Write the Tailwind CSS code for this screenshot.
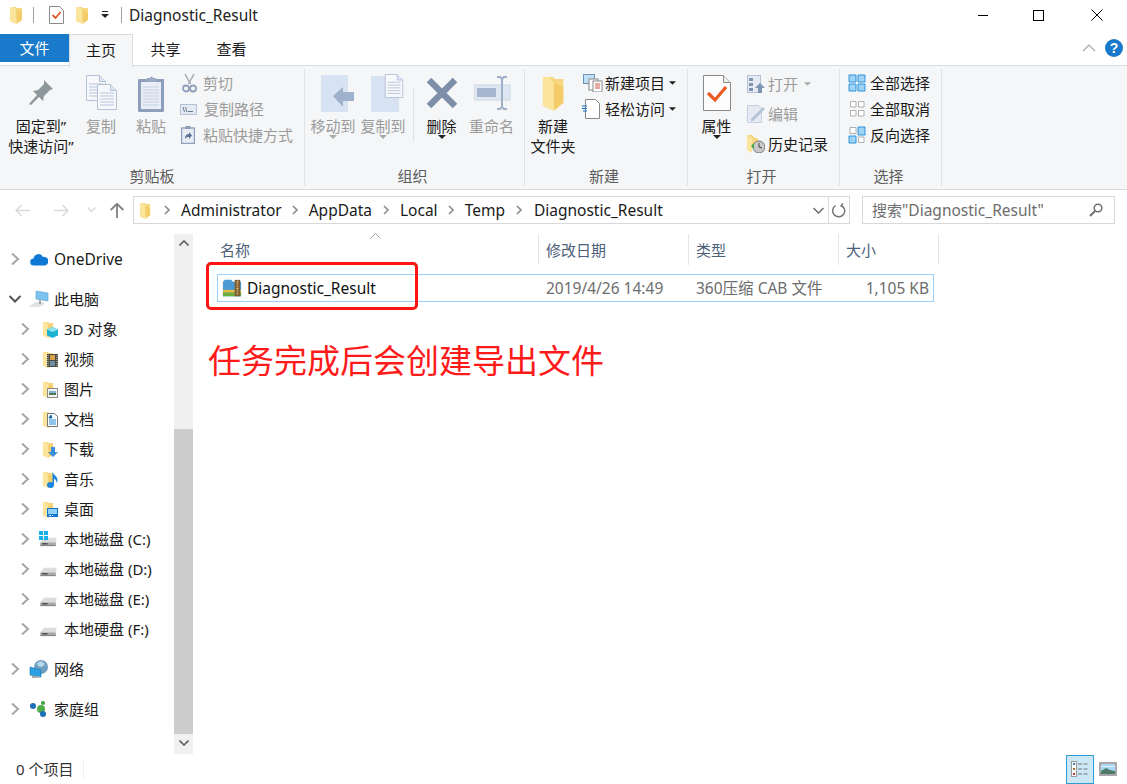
<!DOCTYPE html>
<html><head><meta charset="utf-8"><script src="https://cdn.jsdelivr.net/npm/@tailwindcss/browser@4"></script></head>
<body class="m-0 bg-white">
<svg width="0" height="0" class="absolute">
<defs>
<symbol id="folder" viewBox="0 0 14 18"><path d="M1 1h6l1 1h5v12H5z" fill="#f6d77f"/><path d="M1 1h3.500l3 3v14l-6.500-2.500z" fill="#fbe49c"/><path d="M7.500 4v14l5.500-4V6z" fill="#f4cd68"/></symbol>
<symbol id="chev" viewBox="0 0 10 14"><path d="M2 1.500l6 5.500-6 5.500" fill="none" stroke="#a6a6a6" stroke-width="2"/></symbol>
<symbol id="chevS" viewBox="0 0 8 10"><path d="M2 1l4 4-4 4" fill="none" stroke="#8a8a8a" stroke-width="1.600"/></symbol>
<symbol id="drive" viewBox="0 0 20 12"><path d="M1 7l4-5h14l-1 5z" fill="#dcdcdc"/><path d="M1 7h17v3.500H1z" fill="#a8a8a8"/><path d="M3 8.500h6" stroke="#333" stroke-width="1.200"/><path d="M1 10.500h17" stroke="#777"/></symbol>
<symbol id="doc" viewBox="0 0 20 26"><path d="M.5.500h13l6 6v19H.5z" fill="#f6f8fc" stroke="#b4c0d6"/><path d="M13.500.500v6h6" fill="#dfe6f2" stroke="#b4c0d6"/><path d="M3 9h14M3 12h14M3 15h14M3 18h14M3 21h14" stroke="#b9c5da"/></symbol>
</defs>
</svg>

<div class="w-[1127px] h-[784px] overflow-hidden flex flex-col text-[15px] leading-5 text-[#1a1a1a] bg-white" style="font-family:'Noto Sans','Noto Sans CJK SC',sans-serif">

<!-- title bar -->
<div class="h-[33px] flex items-center pb-[3px]">
 <svg class="ml-[9px] w-[14px] h-[18px]"><use href="#folder"/></svg>
 <div class="ml-[10px] w-px h-4 bg-[#a0a0a0]"></div>
 <svg class="ml-[15px] w-[15px] h-[18px]" viewBox="0 0 15 18"><path d="M.5.500h10l4 4v13H.5z" fill="#fff" stroke="#8a8a8a"/><path d="M3.500 9l3 3 5-6" fill="none" stroke="#e2572a" stroke-width="1.800"/></svg>
 <svg class="ml-[11px] w-[14px] h-[18px]"><use href="#folder"/></svg>
 <svg class="ml-[12px] w-2 h-2" viewBox="0 0 8 8"><path d="M1 0h6v1H1zM0 3h8L4 7z" fill="#222"/></svg>
 <div class="ml-[12px] w-px h-4 bg-[#a0a0a0]"></div>
 <span class="ml-[7px] text-[15.5px] text-[#222]">Diagnostic_Result</span>
 <div class="ml-auto mr-[7px] flex items-center">
  <div class="w-[46px] mr-[9px] flex justify-center"><div class="w-[10px] h-px bg-black"></div></div>
  <div class="w-[46px] mr-[13px] flex justify-center"><div class="w-[11px] h-[11px] border border-black"></div></div>
  <div class="w-[46px] flex justify-center"><svg class="w-[12px] h-[12px]" viewBox="0 0 12 12"><path d="M.5.500l11 11M11.500.500l-11 11" stroke="#000"/></svg></div>
 </div>
</div>

<!-- tabs -->
<div class="h-[33px] flex relative z-10">
 <div class="w-[69px] h-[28px] mt-px bg-[#1979ca] text-white flex items-center justify-center">文件</div>
 <div class="w-[64px] h-[33px] mt-px pb-[3px] bg-[#f5f6f7] border border-b-0 border-[#dadbdc] flex items-center justify-center">主页</div>
 <div class="w-[65px] pb-[2px] flex items-center justify-center">共享</div>
 <div class="w-[67px] pb-[2px] flex items-center justify-center">查看</div>
 <div class="ml-auto flex items-center mr-[4px] mb-[3px]">
  <svg class="w-[14px] h-2 mr-[9px]" viewBox="0 0 14 8"><path d="M1 7l6-6 6 6" fill="none" stroke="#a8a8a8" stroke-width="1.200"/></svg>
  <div class="w-[18px] h-[18px] rounded-full bg-[#1979ca] text-white text-[14px] font-bold flex items-center justify-center" style="font-family:'Liberation Sans'">?</div>
 </div>
</div>

<!-- ribbon -->
<div class="h-[125px] -mt-px bg-[#f5f6f7] border-t border-b border-[#dadbdc] flex text-center">
 <!-- clipboard -->
 <div class="w-[305px] border-r border-[#e1e2e3] my-[3px] flex flex-col">
  <div class="flex flex-1 pl-[3px]">
   <div class="w-[76px] pt-[5px] flex flex-col items-center">
    <div class="h-[38px] flex items-center"><svg class="w-[28px] h-[30px]" viewBox="0 0 28 30"><path d="M17 2l9 9-3 1-6 6-1 5-4-4-8 8-2-1 8-9-4-4 5-1 6-6z" fill="#8e979c"/></svg></div>
    <div class="mt-[4px] leading-5 whitespace-nowrap">固定到”<br>快速访问”</div>
   </div>
   <div class="w-[44px] pt-[5px] flex flex-col items-center text-[#9b9b9b]">
    <div class="h-[38px] flex items-center"><svg class="w-[31px] h-[36px]" viewBox="0 0 31 36"><use href="#doc" x="0" y="0" width="20" height="26"/><use href="#doc" x="11" y="9" width="20" height="26"/></svg></div>
    <div class="mt-[4px]">复制</div>
   </div>
   <div class="w-[56px] pt-[5px] flex flex-col items-center text-[#9b9b9b]">
    <div class="h-[38px] flex items-center"><svg class="w-[27px] h-[37px]" viewBox="0 0 27 37"><rect x="0" y="4" width="26" height="33" rx="1" fill="#8d9fbd"/><rect x="3" y="7" width="20" height="27" fill="#e9eef6"/><path d="M5 12h16M5 15h16M5 18h16M5 21h16M5 24h16M5 27h16M5 30h16" stroke="#c5d0e2"/><path d="M9 7V3h3a1.500 1.500 0 013 0h3v4z" fill="#9aaac4"/></svg></div>
    <div class="mt-[4px]">粘贴</div>
   </div>
   <div class="flex flex-col pt-px text-[#9b9b9b] text-left">
    <div class="h-[26px] flex items-center gap-[6px]"><svg class="ml-[3px] w-[15px] h-[20px]" viewBox="0 0 15 20"><path d="M3 1l5.500 10M12 1L6.500 11" stroke="#a3a9b3" stroke-width="1.500"/><circle cx="4" cy="15.500" r="3" fill="none" stroke="#8fa0bb" stroke-width="1.800"/><circle cx="11" cy="15.500" r="3" fill="none" stroke="#8fa0bb" stroke-width="1.800"/></svg>剪切</div>
    <div class="h-[26px] flex items-center gap-[5px]"><svg class="ml-px w-[17px] h-[11px]" viewBox="0 0 17 11"><rect x=".5" y=".5" width="16" height="10" fill="#e4e9f2" stroke="#b5c1d6"/><path d="M3 3l1.500 5M5.500 3L7 8M8 7.500h5" stroke="#6b7a92"/></svg><span class="ml-[2px]">复制路径</span></div>
    <div class="h-[26px] flex items-center gap-[5px]"><svg class="ml-[2px] w-[14px] h-[18px]" viewBox="0 0 14 18"><rect x=".5" y="2" width="13" height="15.500" fill="#e8edf5" stroke="#8d9fbd" stroke-width="1.400"/><rect x="4.500" y="0" width="5" height="3" fill="#8d9fbd"/><path d="M4 13c0-4 2-5 4-5V6l3 3.500L8 13v-2c-2 0-3 .5-4 2z" fill="#5e7597"/></svg><span class="ml-[3px]">粘贴快捷方式</span></div>
   </div>
  </div>
  <div class="h-[20px] text-[#5c5c5c] leading-5">剪贴板</div>
 </div>
 <!-- organize -->
 <div class="w-[220px] border-r border-[#e1e2e3] my-[3px] flex flex-col">
  <div class="flex flex-1 pl-[3px]">
   <div class="w-[50px] pt-[5px] flex flex-col items-center text-[#9b9b9b]">
    <div class="h-[38px] flex items-center"><svg class="ml-[8px] w-[33px] h-[37px]" viewBox="0 0 33 37"><path d="M0 0h27v37H0z" fill="#d7e3f3"/><path d="M12 21l10-9v5h11v9H22v6z" fill="#9fb1cc"/></svg></div>
    <div class="mt-[4px] whitespace-nowrap">移动到</div>
    <svg class="-mt-px w-2 h-1" viewBox="0 0 8 4"><path d="M0 0h8L4 4z" fill="#aaa"/></svg>
   </div>
   <div class="w-[50px] pt-[5px] flex flex-col items-center text-[#9b9b9b]">
    <div class="h-[38px] flex items-center"><svg class="ml-[8px] w-[33px] h-[38px]" viewBox="0 0 33 38"><path d="M0 2h28v36H0z" fill="#d7e3f3"/><use href="#doc" x="13" y="0" width="20" height="24"/></svg></div>
    <div class="mt-[4px] whitespace-nowrap">复制到</div>
    <svg class="-mt-px w-2 h-1" viewBox="0 0 8 4"><path d="M0 0h8L4 4z" fill="#aaa"/></svg>
   </div>
   <div class="w-px h-[54px] mt-[19px] ml-[5px] bg-[#e1e2e3]"></div>
   <div class="w-[53px] ml-px pt-[5px] flex flex-col items-center">
    <div class="h-[38px] flex items-center"><svg class="w-[32px] h-[32px]" viewBox="0 0 32 32"><path d="M3 3l26 26M29 3L3 29" stroke="#7d8ea9" stroke-width="6.500"/></svg></div>
    <div class="mt-[4px]">删除</div>
    <svg class="-mt-px w-2 h-1" viewBox="0 0 8 4"><path d="M0 0h8L4 4z" fill="#222"/></svg>
   </div>
   <div class="w-[47px] pt-[5px] flex flex-col items-center text-[#9b9b9b]">
    <div class="h-[38px] flex items-center"><svg class="ml-[2px] w-[37px] h-[36px]" viewBox="0 0 37 36"><rect y="10" width="36" height="15" fill="#dfe7f3" stroke="#cbd6e6"/><rect x="3" y="13" width="19" height="9" fill="#a6b6cf"/><path d="M23 2h3l2 2 2-2h3M23 34h3l2-2 2 2h3M28 4v28" fill="none" stroke="#9fb0ca" stroke-width="2"/></svg></div>
    <div class="mt-[4px] whitespace-nowrap">重命名</div>
   </div>
  </div>
  <div class="h-[20px] pr-[4px] text-[#5c5c5c] leading-5">组织</div>
 </div>
 <!-- new -->
 <div class="w-[163px] border-r border-[#e1e2e3] my-[3px] flex flex-col">
  <div class="flex flex-1">
   <div class="w-[56px] pt-[5px] flex flex-col items-center">
    <div class="h-[38px] flex items-center"><svg class="w-[24px] h-[36px]" viewBox="0 0 14 18" preserveAspectRatio="none"><use href="#folder"/></svg></div>
    <div class="mt-[4px] leading-5">新建<br><span class="whitespace-nowrap">文件夹</span></div>
   </div>
   <div class="flex flex-col pt-px text-left">
    <div class="h-[26px] flex items-center whitespace-nowrap"><svg class="ml-[2px] w-[20px] h-[18px]" viewBox="0 0 20 18"><rect x=".5" y=".5" width="11" height="9" fill="#bfe0f5" stroke="#6a93b5"/><rect x="6" y="5" width="9" height="11" fill="#fff" stroke="#888"/><rect x="10" y="7" width="9" height="11" fill="#fff" stroke="#888"/><path d="M12 10h5M12 12h5M12 14h5" stroke="#d4574a"/></svg><span class="ml-[2px]">新建项目</span><svg class="ml-[4px] w-[7px] h-1" viewBox="0 0 8 4"><path d="M0 0h8L4 4z" fill="#222"/></svg></div>
    <div class="h-[26px] flex items-center whitespace-nowrap"><svg class="ml-px w-[18px] h-[20px]" viewBox="0 0 18 20"><path d="M3.500.5h10l4 4v15h-14z" fill="#fff" stroke="#888"/><path d="M0 7h5M0 9.500h5M1 12h4" stroke="#0f6cbd"/></svg><span class="ml-[5px]">轻松访问</span><svg class="ml-[4px] w-[7px] h-1" viewBox="0 0 8 4"><path d="M0 0h8L4 4z" fill="#222"/></svg></div>
   </div>
  </div>
  <div class="h-[20px] pr-[4px] text-[#5c5c5c] leading-5">新建</div>
 </div>
 <!-- open -->
 <div class="w-[152px] border-r border-[#e1e2e3] my-[3px] flex flex-col">
  <div class="flex flex-1">
   <div class="w-[57px] pt-[5px] flex flex-col items-center">
    <div class="h-[38px] flex items-center"><svg class="w-[28px] h-[36px]" viewBox="0 0 28 36"><path d="M.5.500h20l7 7v28H.5z" fill="#fdfdfd" stroke="#8a8a8a"/><path d="M20.500.500v7h7" fill="#eee" stroke="#8a8a8a"/><path d="M5 18l7 7 11-13" fill="none" stroke="#ec5a22" stroke-width="3.200"/></svg></div>
    <div class="mt-[4px]">属性</div>
    <svg class="-mt-px w-2 h-1" viewBox="0 0 8 4"><path d="M0 0h8L4 4z" fill="#222"/></svg>
   </div>
   <div class="flex flex-col text-left whitespace-nowrap">
    <div class="h-[30px] flex items-center text-[#9b9b9b]"><svg class="ml-[2px] w-[18px] h-[18px]" viewBox="0 0 18 18"><rect x=".5" y=".5" width="13" height="17" fill="#e6ebf3" stroke="#b4c0d6"/><path d="M2 3h4v3H2zM2 8h4v3H2zM2 13h4v3H2z" fill="#7f93b3"/><path d="M13 8l5 5h-3v5h-4v-5H8z" fill="#7f93b3"/></svg><span class="ml-[3px] text-[#9b9b9b]">打开</span><svg class="ml-[6px] w-[7px] h-1" viewBox="0 0 8 4"><path d="M0 0h8L4 4z" fill="#aaa"/></svg></div>
    <div class="h-[30px] flex items-center text-[#9b9b9b]"><svg class="ml-[2px] w-[18px] h-[18px]" viewBox="0 0 18 18"><path d="M.5.500h11l3 3v14H.5z" fill="#e6ebf3" stroke="#c3cfe0"/><path d="M4 14L16 2l2 2L6 16H4z" fill="#b6c4d9"/></svg><span class="ml-[3px]">编辑</span></div>
    <div class="h-[30px] flex items-center"><svg class="ml-[2px] w-[18px] h-[18px]" viewBox="0 0 18 18"><path d="M0 0h5l3 3h3v10H0z" fill="#f6d77f"/><path d="M0 0l5 3v15l-5-3z" fill="#fbe49c"/><circle cx="12" cy="12" r="6" fill="#c9c9c9" stroke="#777"/><path d="M12 8v4l3 1" stroke="#444" fill="none"/><path d="M4 11l3-3v6z" fill="#39a845"/></svg><span class="ml-[3px]">历史记录</span></div>
   </div>
  </div>
  <div class="h-[20px] pr-[4px] text-[#5c5c5c] leading-5">打开</div>
 </div>
 <!-- select -->
 <div class="w-[102px] border-r border-[#e1e2e3] my-[3px] flex flex-col">
  <div class="flex flex-col flex-1 pt-px text-left whitespace-nowrap">
   <div class="h-[26px] flex items-center"><svg class="ml-2 w-[18px] h-[18px]" viewBox="0 0 18 18"><path d="M1 1h7v7H1zM10 1h7v7h-7zM1 10h7v7H1zM10 10h7v7h-7z" fill="#9fd3f5" stroke="#2d94dc"/></svg><span class="ml-1">全部选择</span></div>
   <div class="h-[26px] flex items-center"><svg class="ml-2 w-[18px] h-[18px]" viewBox="0 0 18 18"><path d="M2.500 1.500h5.500v5.500H2.500zM10.500 1.500H16v5.500h-5.500zM2.500 10.500h5.500V16H2.500zM10.500 10.500H16V16h-5.500z" fill="#fff" stroke="#b0b0b0"/></svg><span class="ml-1">全部取消</span></div>
   <div class="h-[26px] flex items-center"><svg class="ml-2 w-[18px] h-[18px]" viewBox="0 0 18 18"><path d="M2 1.500h6v6H2zM10.500 11h5.500v5.500h-5.500z" fill="#fff" stroke="#b0b0b0"/><path d="M10 1h7v8h-7zM1 10h7v7H1z" fill="#9fd3f5" stroke="#2d94dc"/></svg><span class="ml-1">反向选择</span></div>
  </div>
  <div class="h-[20px] pr-[4px] text-[#5c5c5c] leading-5">选择</div>
 </div>
</div>

<!-- address row -->
<div class="h-[40px] flex items-center">
 <svg class="ml-[15px] w-[15px] h-[13px]" viewBox="0 0 15 13"><path d="M6.500 1L1 6.500 6.500 12M1 6.500h14" fill="none" stroke="#d9d9d9" stroke-width="1.500"/></svg>
 <svg class="ml-[24px] w-[15px] h-[13px]" viewBox="0 0 15 13"><path d="M8.500 1L14 6.500 8.500 12M14 6.500H0" fill="none" stroke="#d9d9d9" stroke-width="1.500"/></svg>
 <svg class="ml-[18px] w-[9px] h-[6px]" viewBox="0 0 9 6"><path d="M.5.500l4 4 4-4" fill="none" stroke="#d9d9d9" stroke-width="1.500"/></svg>
 <svg class="ml-[14px] w-[14px] h-[15px]" viewBox="0 0 14 15"><path d="M.7 7L7 .8 13.300 7M7 1v14" fill="none" stroke="#808080" stroke-width="1.800"/></svg>
 <div class="ml-[9px] w-[717px] h-[28px] border border-[#d9d9d9] flex items-center">
  <svg class="ml-[5px] w-[12px] h-[17px]" viewBox="0 0 14 18" preserveAspectRatio="none"><use href="#folder"/></svg>
  <svg class="ml-[12px] w-2 h-[10px]"><use href="#chevS"/></svg>
  <span class="ml-[10px] text-[15.5px]">Administrator</span>
  <svg class="ml-[9px] w-2 h-[10px]"><use href="#chevS"/></svg>
  <span class="ml-[10px] text-[15.5px]">AppData</span>
  <svg class="ml-[10px] w-2 h-[10px]"><use href="#chevS"/></svg>
  <span class="ml-[10px] text-[15.5px]">Local</span>
  <svg class="ml-[9px] w-2 h-[10px]"><use href="#chevS"/></svg>
  <span class="ml-[10px] text-[15.5px]">Temp</span>
  <svg class="ml-[10px] w-2 h-[10px]"><use href="#chevS"/></svg>
  <span class="ml-[11px] text-[15.5px]">Diagnostic_Result</span>
  <svg class="ml-auto mr-[4px] w-[11px] h-[7px]" viewBox="0 0 11 7"><path d="M.5 1l5 5 5-5" fill="none" stroke="#666" stroke-width="1.400"/></svg>
  <div class="w-[21px] h-full border-l border-[#d9d9d9] flex items-center justify-center"><svg class="w-[14px] h-[15px]" viewBox="0 0 14 15"><path d="M4.500 2.500a6 6 0 106 .2M3 .5l2 2.300-2.500 1.700" fill="none" stroke="#777" stroke-width="1.500" transform="matrix(-1 0 0 1 14 0)"/></svg></div>
 </div>
 <div class="ml-[12px] w-[253px] h-[28px] border border-[#d9d9d9] flex items-center pl-[9px] text-[15.5px] text-[#6d6d6d] whitespace-nowrap"><span class="text-[15px]">搜索</span>"Diagnostic_Result"<svg class="ml-auto mr-[11px] w-[14px] h-[14px]" viewBox="0 0 14 14"><circle cx="9" cy="5" r="3.800" fill="none" stroke="#6d6d6d" stroke-width="1.500"/><path d="M6 8l-5 5" stroke="#6d6d6d" stroke-width="2"/></svg></div>
</div>

<!-- main -->
<div class="flex flex-1 pt-[4px]">
 <!-- nav -->
 <div class="w-[174px] pt-[10px]">
  <div class="h-[30px] flex items-center"><svg class="ml-[10px] w-[10px] h-[14px]"><use href="#chev"/></svg><svg class="ml-[10px] w-[18px] h-[13px]" viewBox="0 0 18 13"><path d="M4 12.500a3.500 3.500 0 01-.5-7 5 5 0 019.500-1.500 4 4 0 012 8.500z" fill="#0f78d4"/></svg><span class="ml-[6px] text-[15.5px]">OneDrive</span></div>
  <div class="h-[10px]"></div>
  <div class="h-[30px] flex items-center"><svg class="ml-[8px] w-[14px] h-[10px]" viewBox="0 0 14 10"><path d="M1.500 2l5.500 5.500L12.500 2" fill="none" stroke="#555" stroke-width="2"/></svg><svg class="ml-[7px] w-[20px] h-[18px]" viewBox="0 0 20 18"><path d="M7 1l12 2v8L7 9z" fill="#7cc4f0" stroke="#5a9cc8" stroke-width=".6"/><path d="M0 16l7-4h7l2 2-6 3H2z" fill="#dfe3e6"/><path d="M11 10v4" stroke="#aaa" stroke-width="2"/></svg><span class="ml-[5px]">此电脑</span></div>
  <div class="h-[30px] flex items-center"><svg class="ml-[20px] w-[10px] h-[14px]"><use href="#chev"/></svg><span class="relative w-[16px] h-[17px] ml-[12px]"><svg class="w-[12px] h-[17px]" viewBox="0 0 14 18" preserveAspectRatio="none"><use href="#folder"/></svg><svg class="absolute left-[5px] top-[6px] w-[11px] h-[11px]" viewBox="0 0 11 11"><path d="M5.500 0L11 2.500v6L5.500 11 0 8.500v-6z" fill="#1fb3d1"/><path d="M5.500 5L11 2.500 5.500 0 0 2.500z" fill="#8fe3f0"/></svg></span><span class="ml-[6px]">3D 对象</span></div>
  <div class="h-[30px] flex items-center"><svg class="ml-[20px] w-[10px] h-[14px]"><use href="#chev"/></svg><span class="relative w-[16px] h-[17px] ml-[12px]"><svg class="w-[12px] h-[17px]" viewBox="0 0 14 18" preserveAspectRatio="none"><use href="#folder"/></svg><svg class="absolute left-[5px] top-[3px] w-[11px] h-[13px]" viewBox="0 0 11 13"><rect width="11" height="13" fill="#4a4a40"/><rect x="3" y="1" width="5" height="5" fill="#d9a04a"/><rect x="3" y="7" width="5" height="5" fill="#6b8fa6"/><path d="M1 1v11M10 1v11" stroke="#ddd" stroke-dasharray="1 1"/></svg></span><span class="ml-[6px]">视频</span></div>
  <div class="h-[30px] flex items-center"><svg class="ml-[20px] w-[10px] h-[14px]"><use href="#chev"/></svg><span class="relative w-[16px] h-[17px] ml-[12px]"><svg class="w-[12px] h-[17px]" viewBox="0 0 14 18" preserveAspectRatio="none"><use href="#folder"/></svg><svg class="absolute left-[5px] top-[7px] w-[11px] h-[10px]" viewBox="0 0 11 10"><rect x=".5" y=".5" width="10" height="9" fill="#f4f4f4" stroke="#8a8a8a"/><path d="M2 3h7v2H2z" fill="#7fb2d8"/><path d="M2 5h7v2H2z" fill="#55774f"/></svg></span><span class="ml-[6px]">图片</span></div>
  <div class="h-[30px] flex items-center"><svg class="ml-[20px] w-[10px] h-[14px]"><use href="#chev"/></svg><span class="relative w-[16px] h-[17px] ml-[12px]"><svg class="w-[12px] h-[17px]" viewBox="0 0 14 18" preserveAspectRatio="none"><use href="#folder"/></svg><svg class="absolute left-[5px] top-[2px] w-[11px] h-[14px]" viewBox="0 0 11 14"><path d="M.5.500h7l3 3v10H.5z" fill="#fff" stroke="#777"/><path d="M2 5l2-3 1 3zM2 7h7M2 9h7M2 11h7" stroke="#1c87d4"/></svg></span><span class="ml-[6px]">文档</span></div>
  <div class="h-[30px] flex items-center"><svg class="ml-[20px] w-[10px] h-[14px]"><use href="#chev"/></svg><span class="relative w-[16px] h-[17px] ml-[12px]"><svg class="w-[12px] h-[17px]" viewBox="0 0 14 18" preserveAspectRatio="none"><use href="#folder"/></svg><svg class="absolute left-[6px] top-[6px] w-[10px] h-[10px]" viewBox="0 0 10 10"><path d="M3 0h4v5h3l-5 5-5-5h3z" fill="#3a8ddb"/></svg></span><span class="ml-[6px]">下载</span></div>
  <div class="h-[30px] flex items-center"><svg class="ml-[20px] w-[10px] h-[14px]"><use href="#chev"/></svg><span class="relative w-[16px] h-[17px] ml-[12px]"><svg class="w-[12px] h-[17px]" viewBox="0 0 14 18" preserveAspectRatio="none"><use href="#folder"/></svg><svg class="absolute left-[5px] top-[1px] w-[11px] h-[16px]" viewBox="0 0 11 16"><ellipse cx="3.500" cy="13" rx="3.500" ry="3" fill="#1a86e0"/><path d="M5.500 13V0c1 3 5 4 5 8 0 1-.5 2-1 3 0-2-1-4-2.500-4.500V13z" fill="#1a86e0"/></svg></span><span class="ml-[6px]">音乐</span></div>
  <div class="h-[30px] flex items-center"><svg class="ml-[20px] w-[10px] h-[14px]"><use href="#chev"/></svg><span class="relative w-[16px] h-[17px] ml-[12px]"><svg class="w-[12px] h-[17px]" viewBox="0 0 14 18" preserveAspectRatio="none"><use href="#folder"/></svg><svg class="absolute left-[5px] top-[7px] w-[11px] h-[9px]" viewBox="0 0 11 9"><rect width="11" height="9" fill="#0f78d4"/><rect x="1" y="1" width="9" height="5" fill="#8fd0f7"/><path d="M2 7.500h2M5 7.500h1" stroke="#fff"/></svg></span><span class="ml-[6px]">桌面</span></div>
  <div class="h-[30px] flex items-center"><svg class="ml-[20px] w-[10px] h-[14px]"><use href="#chev"/></svg><span class="relative w-[20px] h-[17px] ml-[9px]"><svg class="absolute left-0 top-[5px] w-[19px] h-[11px]"><use href="#drive"/></svg><svg class="absolute left-0 top-0 w-[9px] h-[9px]" viewBox="0 0 9 9"><path d="M0 0h4v4H0zM5 0h4v4H5zM0 5h4v4H0zM5 5h4v4H5z" fill="#16b1ea"/></svg></span><span class="ml-[5px] whitespace-nowrap">本地磁盘 (C:)</span></div>
  <div class="h-[30px] flex items-center"><svg class="ml-[20px] w-[10px] h-[14px]"><use href="#chev"/></svg><span class="relative w-[20px] h-[17px] ml-[9px]"><svg class="absolute left-0 top-[5px] w-[19px] h-[11px]"><use href="#drive"/></svg></span><span class="ml-[5px] whitespace-nowrap">本地磁盘 (D:)</span></div>
  <div class="h-[30px] flex items-center"><svg class="ml-[20px] w-[10px] h-[14px]"><use href="#chev"/></svg><span class="relative w-[20px] h-[17px] ml-[9px]"><svg class="absolute left-0 top-[5px] w-[19px] h-[11px]"><use href="#drive"/></svg></span><span class="ml-[5px] whitespace-nowrap">本地磁盘 (E:)</span></div>
  <div class="h-[30px] flex items-center"><svg class="ml-[20px] w-[10px] h-[14px]"><use href="#chev"/></svg><span class="relative w-[20px] h-[17px] ml-[9px]"><svg class="absolute left-0 top-[5px] w-[19px] h-[11px]"><use href="#drive"/></svg></span><span class="ml-[5px] whitespace-nowrap">本地硬盘 (F:)</span></div>
  <div class="h-[10px]"></div>
  <div class="h-[30px] flex items-center"><svg class="ml-[10px] w-[10px] h-[14px]"><use href="#chev"/></svg><svg class="ml-[9px] w-[20px] h-[19px]" viewBox="0 0 20 19"><circle cx="12" cy="7" r="7" fill="#6f9fc0"/><path d="M8 3l4-2 4 3-3 3-4-1z" fill="#b8d7ea"/><path d="M1 7l11 3v7L1 15z" fill="#2f9fe3" stroke="#1d73ab" stroke-width=".6"/><path d="M3 16h7v2H3z" fill="#aaa"/></svg><span class="ml-[5px]">网络</span></div>
  <div class="h-[10px]"></div>
  <div class="h-[30px] flex items-center"><svg class="ml-[10px] w-[10px] h-[14px]"><use href="#chev"/></svg><svg class="ml-[10px] w-[18px] h-[16px]" viewBox="0 0 18 16"><circle cx="3" cy="5" r="3" fill="#1d6fb8"/><circle cx="11" cy="8" r="4" fill="#4fae4a"/><circle cx="13" cy="2" r="2" fill="#3f9e3a"/><circle cx="13" cy="13" r="3" fill="#1d6fb8"/></svg><span class="ml-[6px]">家庭组</span></div>
 </div>
 <!-- scrollbar -->
 <div class="w-[19px] h-[520px] bg-[#f0f0f0] flex flex-col items-center">
  <div class="h-[195px] w-full flex justify-center pt-[6px]"><svg class="w-[10px] h-[6px]" viewBox="0 0 10 6"><path d="M.5 5.500L5 1l4.500 4.500" fill="none" stroke="#606060" stroke-width="1.600"/></svg></div>
  <div class="h-[305px] w-full bg-[#cdcdcd]"></div>
  <div class="h-[20px] w-full flex justify-center pt-[6px]"><svg class="w-[10px] h-[6px]" viewBox="0 0 10 6"><path d="M.5.500L5 5l4.500-4.500" fill="none" stroke="#606060" stroke-width="1.600"/></svg></div>
 </div>
 <!-- content -->
 <div class="flex-1 relative pl-[24px]">
  <svg class="absolute left-[177px] top-[-1px] w-[11px] h-[6px]" viewBox="0 0 11 6"><path d="M.5 5.500l5-5 5 5" fill="none" stroke="#a0a0a0"/></svg>
  <div class="h-[31px] flex text-[#4c607a] items-stretch">
   <div class="w-[320px] ml-[2px] pl-[1px] border-r border-[#e5e5e5] flex items-center">名称</div>
   <div class="w-[150px] pl-[7px] border-r border-[#e5e5e5] flex items-center">修改日期</div>
   <div class="w-[150px] pl-[7px] border-r border-[#e5e5e5] flex items-center">类型</div>
   <div class="w-[100px] pl-[7px] border-r border-[#e5e5e5] flex items-center">大小</div>
  </div>
  <div class="mt-[9px] w-[717px] h-[28px] border border-[#99d1ff] flex items-center text-[15.5px] text-[#6d6d6d] whitespace-nowrap">
   <svg class="ml-[4px] w-[20px] h-[19px]" viewBox="0 0 22 19"><path d="M1 2l2-2h7l2 2h9v16H1z" fill="#4b9ad6"/><path d="M1 11h20v3H1z" fill="#e8b93e"/><path d="M1 14h20v4H1z" fill="#6cae3c"/><rect x="14" y="0" width="6" height="18" fill="#7a5a2e"/><path d="M17 1v16" stroke="#e4c98c" stroke-dasharray="1 1" stroke-width="2"/></svg>
   <span class="ml-[5px] w-[299px] text-[#111]">Diagnostic_Result</span>
   <span class="w-[150px]">2019/4/26 14:49</span>
   <span class="w-[233px] flex justify-between"><span>360压缩 CAB 文件</span><span>1,105 KB</span></span>
  </div>
  <div class="mt-[37px] ml-[-9px] text-[33px] leading-[40px] text-[#ff1a1a] whitespace-nowrap" style="font-family:'Noto Sans CJK SC',sans-serif">任务完成后会创建导出文件</div>
  <div class="absolute left-[13px] top-[28px] w-[212px] h-[48px] border-[3px] border-[#ff1414] rounded-[5px]"></div>
 </div>
</div>

<!-- status -->
<div class="h-[30px] flex items-center text-[#333]">
 <span class="ml-[16px]">0 个项目</span>
 <div class="ml-[10px] w-px h-[20px] bg-[#f0f0f0]"></div>
 <div class="ml-auto mr-[10px] flex items-center">
  <div class="w-[28px] h-[29px] bg-[#cce8f7] border border-[#2e9bd6] flex items-center justify-center"><svg class="w-[18px] h-[16px]" viewBox="0 0 18 16"><rect x=".5" y=".5" width="5" height="15" fill="#fff" stroke="#999"/><path d="M2 2h2v2H2z" fill="#3a78b0"/><path d="M2 7h2v2H2z" fill="#b06a3a"/><path d="M2 12h2v2H2z" fill="#c03030"/><path d="M7 3h4M12.500 3h4M7 8h4M12.500 8h4M7 13h4M12.500 13h4" stroke="#777"/></svg></div>
  <svg class="ml-[5px] w-[18px] h-[14px]" viewBox="0 0 18 14"><rect x="1" y="1" width="16" height="12" fill="#a8d8f5" stroke="#a8a8a8" stroke-width="2"/><path d="M2 9l5-3 4 2 5 1v3H2z" fill="#4f7a6a"/><path d="M2 4h14v1H2z" fill="#dff2fb"/></svg>
 </div>
</div>
</div>
</body></html>
